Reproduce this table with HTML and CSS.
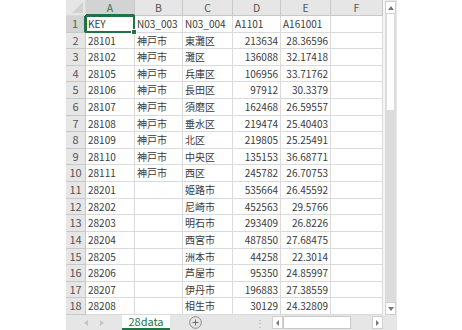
FILE: index.html
```html
<!DOCTYPE html>
<html lang="ja">
<head>
<meta charset="UTF-8">
<title>28data</title>
<link rel="stylesheet" href="styles.css">
</head>
<body>
<div class="sheet">
  <div class="main">
    <div class="grid">
      <!-- column headers -->
      <div class="row head">
        <div class="corner"><span class="tri"></span></div>
        <div class="col sel">A</div>
        <div class="col">B</div>
        <div class="col">C</div>
        <div class="col">D</div>
        <div class="col">E</div>
        <div class="col">F</div>
      </div>

      <div class="row">
        <div class="num sel">1</div>
        <div class="cell active">KEY<span class="handle"></span></div>
        <div class="cell">N03_003</div>
        <div class="cell">N03_004</div>
        <div class="cell">A1101</div>
        <div class="cell">A161001</div>
        <div class="cell"></div>
      </div>
      <div class="row">
        <div class="num">2</div>
        <div class="cell">28101</div>
        <div class="cell">神戸市</div>
        <div class="cell">東灘区</div>
        <div class="cell r">213634</div>
        <div class="cell r">28.36596</div>
        <div class="cell"></div>
      </div>
      <div class="row">
        <div class="num">3</div>
        <div class="cell">28102</div>
        <div class="cell">神戸市</div>
        <div class="cell">灘区</div>
        <div class="cell r">136088</div>
        <div class="cell r">32.17418</div>
        <div class="cell"></div>
      </div>
      <div class="row">
        <div class="num">4</div>
        <div class="cell">28105</div>
        <div class="cell">神戸市</div>
        <div class="cell">兵庫区</div>
        <div class="cell r">106956</div>
        <div class="cell r">33.71762</div>
        <div class="cell"></div>
      </div>
      <div class="row">
        <div class="num">5</div>
        <div class="cell">28106</div>
        <div class="cell">神戸市</div>
        <div class="cell">長田区</div>
        <div class="cell r">97912</div>
        <div class="cell r">30.3379</div>
        <div class="cell"></div>
      </div>
      <div class="row">
        <div class="num">6</div>
        <div class="cell">28107</div>
        <div class="cell">神戸市</div>
        <div class="cell">須磨区</div>
        <div class="cell r">162468</div>
        <div class="cell r">26.59557</div>
        <div class="cell"></div>
      </div>
      <div class="row">
        <div class="num">7</div>
        <div class="cell">28108</div>
        <div class="cell">神戸市</div>
        <div class="cell">垂水区</div>
        <div class="cell r">219474</div>
        <div class="cell r">25.40403</div>
        <div class="cell"></div>
      </div>
      <div class="row">
        <div class="num">8</div>
        <div class="cell">28109</div>
        <div class="cell">神戸市</div>
        <div class="cell">北区</div>
        <div class="cell r">219805</div>
        <div class="cell r">25.25491</div>
        <div class="cell"></div>
      </div>
      <div class="row">
        <div class="num">9</div>
        <div class="cell">28110</div>
        <div class="cell">神戸市</div>
        <div class="cell">中央区</div>
        <div class="cell r">135153</div>
        <div class="cell r">36.68771</div>
        <div class="cell"></div>
      </div>
      <div class="row">
        <div class="num">10</div>
        <div class="cell">28111</div>
        <div class="cell">神戸市</div>
        <div class="cell">西区</div>
        <div class="cell r">245782</div>
        <div class="cell r">26.70753</div>
        <div class="cell"></div>
      </div>
      <div class="row">
        <div class="num">11</div>
        <div class="cell">28201</div>
        <div class="cell"></div>
        <div class="cell">姫路市</div>
        <div class="cell r">535664</div>
        <div class="cell r">26.45592</div>
        <div class="cell"></div>
      </div>
      <div class="row">
        <div class="num">12</div>
        <div class="cell">28202</div>
        <div class="cell"></div>
        <div class="cell">尼崎市</div>
        <div class="cell r">452563</div>
        <div class="cell r">29.5766</div>
        <div class="cell"></div>
      </div>
      <div class="row">
        <div class="num">13</div>
        <div class="cell">28203</div>
        <div class="cell"></div>
        <div class="cell">明石市</div>
        <div class="cell r">293409</div>
        <div class="cell r">26.8226</div>
        <div class="cell"></div>
      </div>
      <div class="row">
        <div class="num">14</div>
        <div class="cell">28204</div>
        <div class="cell"></div>
        <div class="cell">西宮市</div>
        <div class="cell r">487850</div>
        <div class="cell r">27.68475</div>
        <div class="cell"></div>
      </div>
      <div class="row">
        <div class="num">15</div>
        <div class="cell">28205</div>
        <div class="cell"></div>
        <div class="cell">洲本市</div>
        <div class="cell r">44258</div>
        <div class="cell r">22.3014</div>
        <div class="cell"></div>
      </div>
      <div class="row">
        <div class="num">16</div>
        <div class="cell">28206</div>
        <div class="cell"></div>
        <div class="cell">芦屋市</div>
        <div class="cell r">95350</div>
        <div class="cell r">24.85997</div>
        <div class="cell"></div>
      </div>
      <div class="row">
        <div class="num">17</div>
        <div class="cell">28207</div>
        <div class="cell"></div>
        <div class="cell">伊丹市</div>
        <div class="cell r">196883</div>
        <div class="cell r">27.38559</div>
        <div class="cell"></div>
      </div>
      <div class="row">
        <div class="num">18</div>
        <div class="cell">28208</div>
        <div class="cell"></div>
        <div class="cell">相生市</div>
        <div class="cell r">30129</div>
        <div class="cell r">24.32809</div>
        <div class="cell"></div>
      </div>
    </div>

    <!-- vertical scrollbar -->
    <div class="vscroll">
      <div class="vbtn"><svg width="6" height="4" viewBox="0 0 6 4"><path d="M0 4 L3 0 L6 4 Z" fill="#777"/></svg></div>
      <div class="vtrack"><div class="vthumb"></div></div>
      <div class="vbtn"><svg width="6" height="4" viewBox="0 0 6 4"><path d="M0 0 L3 4 L6 0 Z" fill="#777"/></svg></div>
    </div>
  </div>

  <!-- sheet tabs -->
  <div class="tabbar">
    <div class="nav">
      <svg width="4" height="6" viewBox="0 0 4 6"><path d="M4 0 L0 3 L4 6 Z" fill="#c4c4c4"/></svg>
      <svg width="4" height="6" viewBox="0 0 4 6"><path d="M0 0 L4 3 L0 6 Z" fill="#c4c4c4"/></svg>
    </div>
    <div class="tab">28data</div>
    <div class="add">
      <svg width="13" height="13" viewBox="0 0 13 13"><circle cx="6.5" cy="6.5" r="5.8" fill="none" stroke="#8a8a8a" stroke-width="1"/><path d="M6.5 3.5 V9.5 M3.5 6.5 H9.5" stroke="#6a6a6a" stroke-width="1"/></svg>
    </div>
    <div class="dots">⋮</div>
    <div class="hscroll">
      <div class="hbtn"><svg width="3" height="6" viewBox="0 0 3 6"><path d="M3 0 L0 3 L3 6 Z" fill="#777"/></svg></div>
      <div class="hthumb"></div>
      <div class="htrack"></div>
      <div class="hbtn"><svg width="3" height="6" viewBox="0 0 3 6"><path d="M0 0 L3 3 L0 6 Z" fill="#777"/></svg></div>
    </div>
    <div class="corner2"></div>
  </div>
</div>
</body>
</html>
```

FILE: styles.css
```css
body {
margin: 0;
background: #fff;
font-family: "Noto Sans CJK JP", "Noto Sans", sans-serif;
font-size: 10px;
color: #3a3a3a;
}

.sheet {
margin-left: 66px;
width: 331px;
}

.main {
display: flex;
}

.grid {
width: 317px;
}

.row {
display: grid;
grid-template-columns: 20px 49px 48px 50px 48px 50px 52px;
height: 16.61px;
}

.row.head {
height: 16px;
}

.row > div {
box-sizing: border-box;
border-right: 1px solid #dadada;
border-bottom: 1px solid #dadada;
line-height: 15px;
white-space: nowrap;
overflow: hidden;
}

.corner {
background: #e6e6e6;
position: relative;
}

.tri {
position: absolute;
right: 2px;
bottom: 2px;
width: 0;
height: 0;
border-left: 11px solid transparent;
border-bottom: 11px solid #d2d2d2;
}

.row > .col {
background: #e6e6e6;
border-color: #c8c8c8;
text-align: center;
color: #555;
font-size: 10.5px;
}

.row > .num {
background: #e6e6e6;
border-color: #c8c8c8;
text-align: center;
color: #555;
font-size: 11px;
}

.row > .col.sel {
background: #d3d3d3;
color: #3f6b52;
border-bottom: 2px solid #217346;
}

.row > .num.sel {
background: #d3d3d3;
color: #3f6b52;
border-right: 2px solid #217346;
}

.cell {
padding: 0 2px;
}

.cell.r {
text-align: right;
}

.row > .cell.active {
position: relative;
overflow: visible;
}

.cell.active::after {
content: "";
position: absolute;
left: -1px;
top: -1px;
right: -1px;
bottom: -1px;
border: 2px solid #217346;
}

.handle {
position: absolute;
right: -3px;
bottom: -3px;
width: 4px;
height: 4px;
background: #217346;
border: 1px solid #fff;
z-index: 2;
}

.vscroll {
width: 14px;
height: 315px;
box-sizing: border-box;
background: #e8e8e8;
border-left: 2px solid #f6f6f6;
display: flex;
flex-direction: column;
padding: 1px 1px 0 0;
}

.vbtn {
height: 11px;
background: #fff;
border: 1px solid #d0d0d0;
display: flex;
align-items: center;
justify-content: center;
}

.vtrack {
flex: 1;
background: #dcdcdc;
padding: 0 2px;
}

.vthumb {
height: 96px;
background: #fff;
}

.tabbar {
display: flex;
height: 15px;
background: #e6e6e6;
align-items: stretch;
}

.nav {
width: 56px;
display: flex;
align-items: center;
justify-content: center;
gap: 12px;
}

.tab {
width: 48px;
background: #fff;
color: #217346;
font-size: 11px;
text-align: center;
line-height: 13px;
box-sizing: border-box;
border-bottom: 2px solid #217346;
}

.add {
width: 46px;
display: flex;
align-items: center;
justify-content: center;
padding-left: 4px;
box-sizing: border-box;
}

.dots {
width: 56px;
text-align: right;
padding-right: 7px;
box-sizing: border-box;
color: #aaa;
line-height: 15px;
}

.hscroll {
display: flex;
align-items: center;
width: 111px;
height: 13px;
margin-top: 1px;
}

.hbtn {
width: 9px;
height: 11px;
background: #fff;
border: 1px solid #d0d0d0;
display: flex;
align-items: center;
justify-content: center;
}

.hthumb {
width: 66px;
height: 11px;
background: #fff;
border: 1px solid #c8c8c8;
}

.htrack {
flex: 1;
height: 13px;
}

.corner2 {
flex: 1;
}
```
